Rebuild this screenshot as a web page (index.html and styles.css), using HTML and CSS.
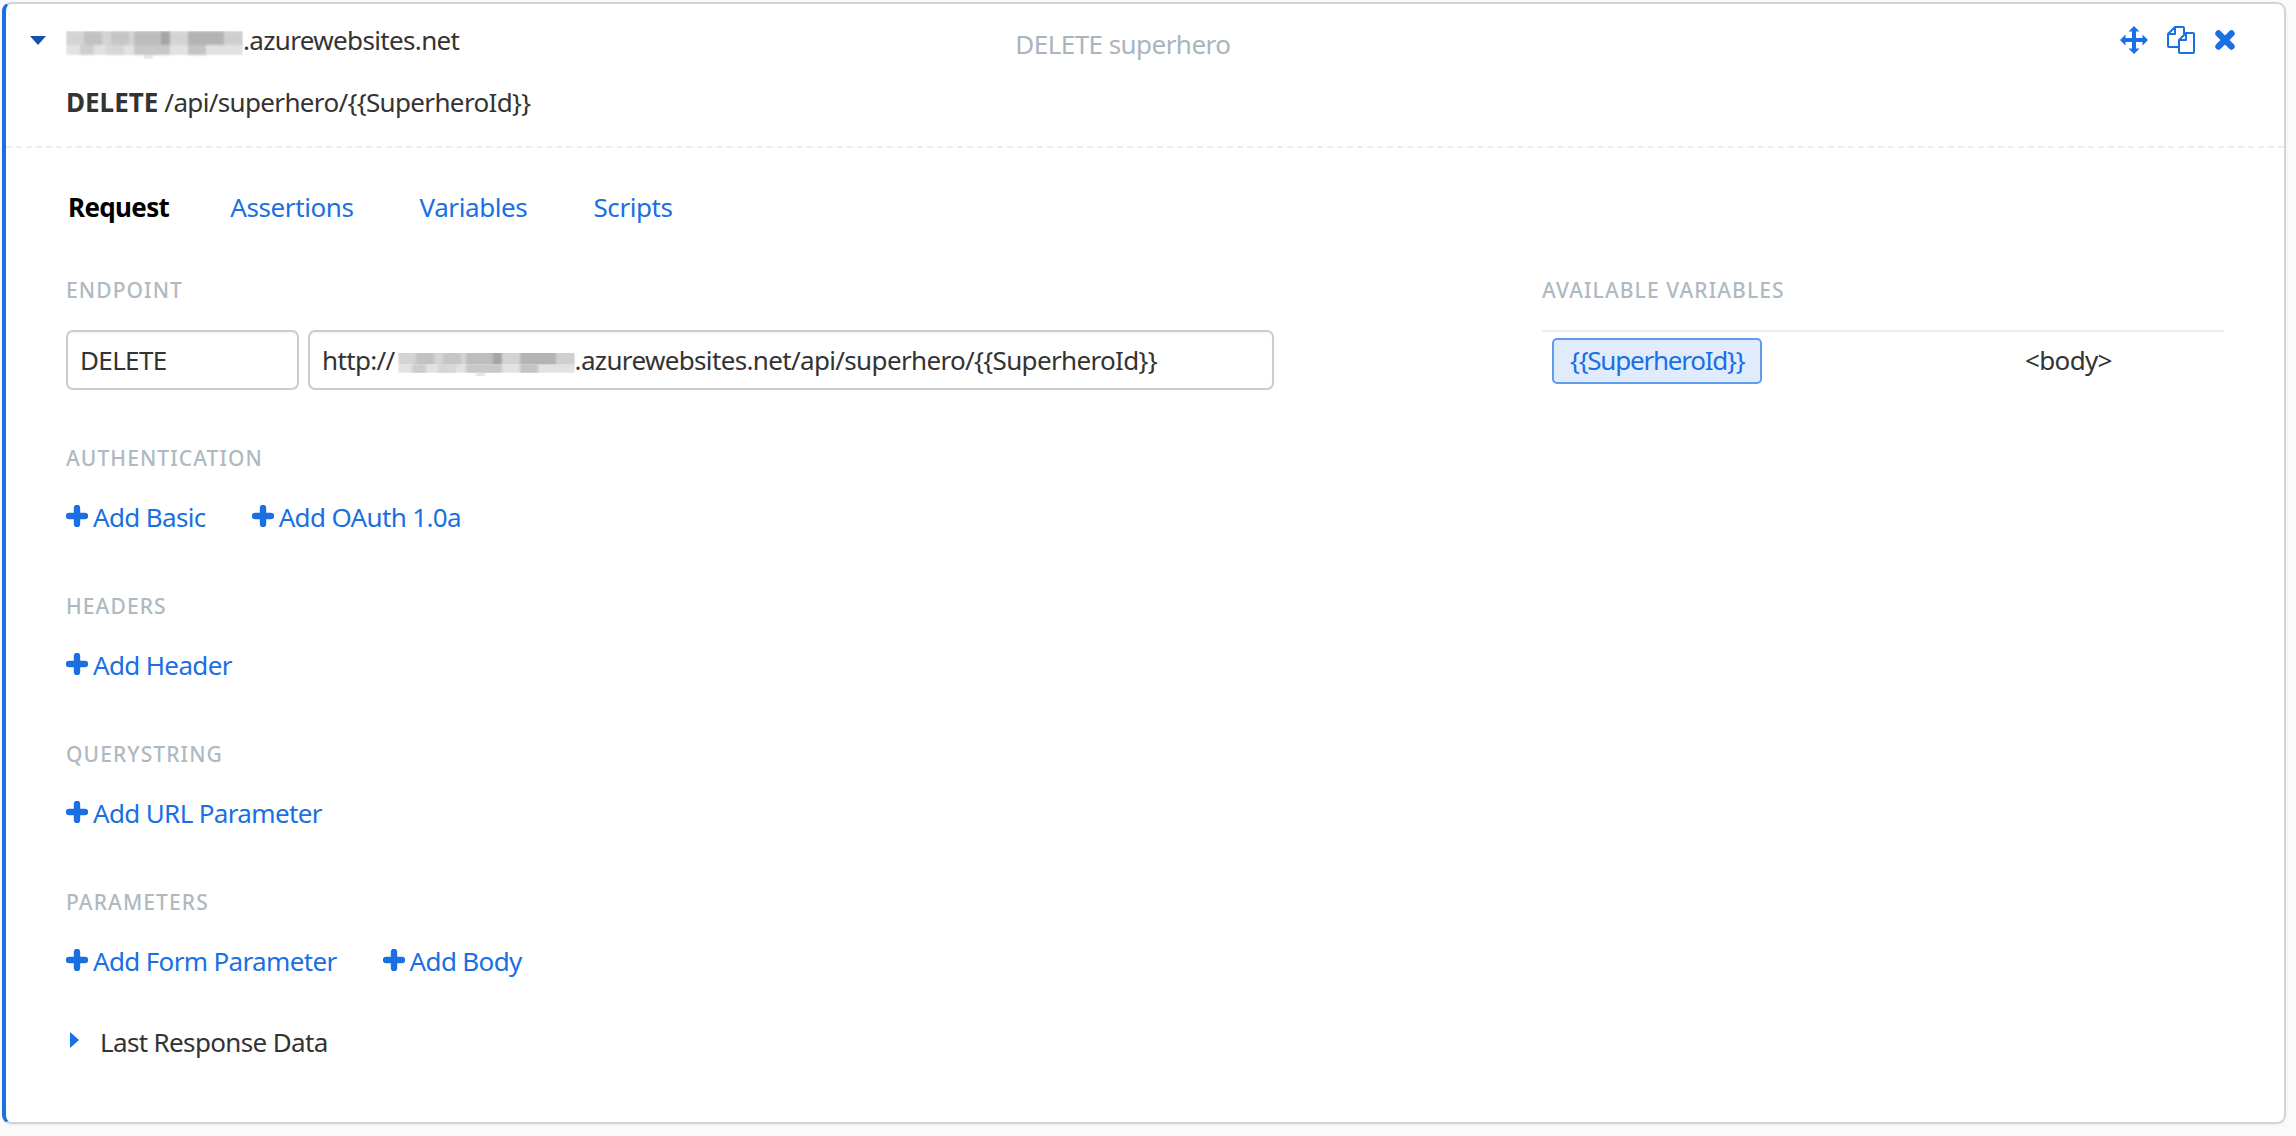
FILE: index.html
```html
<!DOCTYPE html>
<html lang="en">
<head>
<meta charset="utf-8">
<title>DELETE superhero</title>
<link rel="stylesheet" href="styles.css">
</head>
<body>
<svg class="defs" width="0" height="0" aria-hidden="true">
  <defs>
    <filter id="soft" x="-5%" y="-10%" width="110%" height="120%"><feGaussianBlur stdDeviation="0.9"/></filter>
    <g id="mosaic" filter="url(#soft)">
      <rect x="0" y="0" width="177" height="14" fill="#d4d4d4"/>
      <rect x="18" y="0" width="18" height="14" fill="#c2c2c2"/>
      <rect x="45" y="0" width="18" height="14" fill="#c6c6c6"/>
      <rect x="68" y="0" width="27" height="14" fill="#bdbdbd"/>
      <rect x="95" y="0" width="9" height="14" fill="#a6a6a6"/>
      <rect x="122" y="0" width="36" height="14" fill="#b4b4b4"/>
      <rect x="158" y="0" width="19" height="14" fill="#cfcfcf"/>
      <rect x="0" y="14" width="177" height="10" fill="#e2e2e2"/>
      <rect x="14" y="14" width="14" height="10" fill="#cdcdcd"/>
      <rect x="40" y="14" width="18" height="10" fill="#d6d6d6"/>
      <rect x="68" y="14" width="36" height="10" fill="#c8c8c8"/>
      <rect x="122" y="14" width="18" height="10" fill="#c4c4c4"/>
      <rect x="78" y="24" width="9" height="4" fill="#e6e6e6"/>
    </g>
  </defs>
</svg>
<main class="card">
  <header class="head">
    <div class="head-top">
      <svg class="caret-down" viewBox="0 0 16 9"><path d="M0 0h16L8 9z"/></svg>
      <span class="host"><svg class="mosaic" viewBox="0 0 177 28" preserveAspectRatio="none"><use href="#mosaic"/></svg>.azurewebsites.net</span>
      <span class="step-title">DELETE superhero</span>
      <div class="tools">
        <svg class="ic-move" viewBox="0 0 28 28"><path d="M14 0l5.500 5.500h-3.500v6.500h6.500V8.500L28 14l-5.500 5.500V16H16v6.500h3.500L14 28l-5.500-5.500H12V16H5.500v3.500L0 14l5.500-5.500V12H12V5.500H8.500z"/></svg>
        <svg class="ic-copy" viewBox="0 0 28 28"><path d="M17 8V2a1 1 0 0 0-1-1H8L1 8v12a1 1 0 0 0 1 1h10M8 1v7H1"/><path d="M19 7h7a1 1 0 0 1 1 1v18a1 1 0 0 1-1 1H13a1 1 0 0 1-1-1V14zM19 7v7h-7"/></svg>
        <svg class="ic-x" viewBox="0 0 20 20"><path d="M3.500 3.500l13 13M16.500 3.500l-13 13"/></svg>
      </div>
    </div>
    <div class="route"><b>DELETE</b> /api/superhero/{{SuperheroId}}</div>
  </header>
  <div class="body">
    <nav class="tabs">
      <span class="tab active">Request</span>
      <a class="tab">Assertions</a>
      <a class="tab">Variables</a>
      <a class="tab">Scripts</a>
    </nav>
    <div class="columns">
      <div class="main">
        <h4 class="label">ENDPOINT</h4>
        <div class="endpoint">
          <div class="field field-method">DELETE</div>
          <div class="field field-url">http://<svg class="mosaic mosaic-url" viewBox="0 0 177 28" preserveAspectRatio="none"><use href="#mosaic"/></svg>.azurewebsites.net/api/superhero/{{SuperheroId}}</div>
        </div>
        <section class="section">
          <h4 class="label">AUTHENTICATION</h4>
          <div class="adds">
            <a class="add"><svg class="plus" viewBox="0 0 22 22"><path d="M11 3v16M3 11h16"/></svg>Add Basic</a>
            <a class="add"><svg class="plus" viewBox="0 0 22 22"><path d="M11 3v16M3 11h16"/></svg>Add OAuth 1.0a</a>
          </div>
        </section>
        <section class="section">
          <h4 class="label">HEADERS</h4>
          <div class="adds">
            <a class="add"><svg class="plus" viewBox="0 0 22 22"><path d="M11 3v16M3 11h16"/></svg>Add Header</a>
          </div>
        </section>
        <section class="section">
          <h4 class="label">QUERYSTRING</h4>
          <div class="adds">
            <a class="add"><svg class="plus" viewBox="0 0 22 22"><path d="M11 3v16M3 11h16"/></svg>Add URL Parameter</a>
          </div>
        </section>
        <section class="section">
          <h4 class="label">PARAMETERS</h4>
          <div class="adds">
            <a class="add"><svg class="plus" viewBox="0 0 22 22"><path d="M11 3v16M3 11h16"/></svg>Add Form Parameter</a>
            <a class="add"><svg class="plus" viewBox="0 0 22 22"><path d="M11 3v16M3 11h16"/></svg>Add Body</a>
          </div>
        </section>
        <div class="last">
          <svg class="caret-right" viewBox="0 0 9 16"><path d="M0 0l9 8-9 8z"/></svg>
          <span>Last Response Data</span>
        </div>
      </div>
      <aside class="vars">
        <h4 class="label">AVAILABLE VARIABLES</h4>
        <div class="var-row">
          <div class="var-name"><span class="chip">{{SuperheroId}}</span></div>
          <div class="var-src">&lt;body&gt;</div>
        </div>
      </aside>
    </div>
  </div>
</main>
</body>
</html>
```
FILE: styles.css
```css
* { box-sizing: border-box; }
html, body { margin: 0; padding: 0; }
body {
  background: #fafafa;
  color: #333;
  font-family: "Noto Sans", "Open Sans", sans-serif;
  font-size: 26px;
  line-height: 36px;
  letter-spacing: -0.65px;
  height: 1136px;
  overflow: hidden;
  padding: 2px 10px 0 2px;
}
.defs { position: absolute; }
.card {
  height: 1122px;
  background: #fff;
  border: 2px solid #cdd5dc;
  border-left: 4px solid #1a6fe3;
  border-radius: 9px;
  box-shadow: 0 1px 3px rgba(0, 0, 0, 0.06);
}
.head {
  padding: 18px 0 26px 60px;
  border-bottom: 2px dashed #eee;
}
.head-top {
  display: flex;
  align-items: center;
  height: 36px;
  position: relative;
}
.caret-down {
  width: 16px;
  height: 9px;
  fill: #1552a8;
  margin-left: -36px;
  margin-right: 20px;
  flex: none;
}
.mosaic {
  width: 177px;
  height: 28px;
  vertical-align: -9px;
}
.host { white-space: nowrap; }
.step-title {
  color: #a9b4bd;
  margin-left: 556px;
  letter-spacing: -0.55px;
  position: relative;
  top: 4px;
}
.tools {
  display: flex;
  align-items: center;
  margin-left: auto;
  margin-right: 49px;
}
.ic-move { width: 28px; height: 28px; fill: #1a6fe3; }
.ic-copy {
  width: 28px;
  height: 28px;
  margin-left: 19px;
  fill: #fff;
  stroke: #1a6fe3;
  stroke-width: 2;
  stroke-linejoin: round;
}
.ic-x {
  width: 20px;
  height: 20px;
  margin-left: 20px;
  fill: none;
  stroke: #1a6fe3;
  stroke-width: 6.4;
  stroke-linecap: round;
}
.route { margin-top: 26px; white-space: nowrap; }
.route b { font-weight: 700; letter-spacing: 0; }
.body { padding: 41px 60px 0 60px; }
.tabs { display: flex; letter-spacing: -0.4px; }
.tab { color: #1a6fe3; margin-right: 66px; }
.tab.active {
  color: #000;
  font-weight: 700;
  letter-spacing: -0.65px;
  margin-left: 2px;
  margin-right: 61px;
}
.columns {
  display: grid;
  grid-template-columns: 1476px 682px;
  margin-top: 52px;
}
.label {
  margin: 0;
  color: #aeb9c2;
  font-size: 21px;
  line-height: 26px;
  font-weight: 500;
  letter-spacing: 1.1px;
}
.endpoint {
  display: flex;
  gap: 9px;
  margin-top: 27px;
}
.field {
  height: 60px;
  border: 2px solid #ccc;
  border-radius: 7px;
  padding: 0 12px;
  line-height: 56px;
  white-space: nowrap;
  box-shadow: inset 0 2px 2px rgba(0, 0, 0, 0.03);
}
.field-method { width: 233px; }
.field-url { width: 966px; }
.mosaic-url { height: 23px; vertical-align: -6px; margin-left: 3px; }
.section { margin-top: 55px; }
.section + .section { margin-top: 58px; }
.adds {
  display: flex;
  gap: 46px;
  margin-top: 28px;
}
.add {
  display: flex;
  align-items: center;
  color: #1a6fe3;
  white-space: nowrap;
}
.plus {
  width: 22px;
  height: 22px;
  margin-right: 5px;
  fill: none;
  stroke: #1a6fe3;
  stroke-width: 6.4;
  stroke-linecap: round;
  position: relative;
  top: -1px;
}
.last {
  display: flex;
  align-items: center;
  margin-top: 45px;
  padding-left: 4px;
}
.caret-right {
  width: 9px;
  height: 16px;
  fill: #1a6fe3;
  margin-right: 21px;
  position: relative;
  top: -2px;
}
.var-row {
  display: flex;
  margin-top: 27px;
  padding-top: 6px;
  border-top: 2px solid #eee;
}
.var-name { width: 483px; padding-left: 10px; }
.var-src { line-height: 44px; }
.chip {
  display: inline-block;
  height: 46px;
  padding: 0 16px;
  line-height: 40px;
  letter-spacing: -1.23px;
  color: #1a6fe3;
  background: #e0ecfb;
  border: 2px solid #5f9bee;
  border-radius: 5px;
}
```
